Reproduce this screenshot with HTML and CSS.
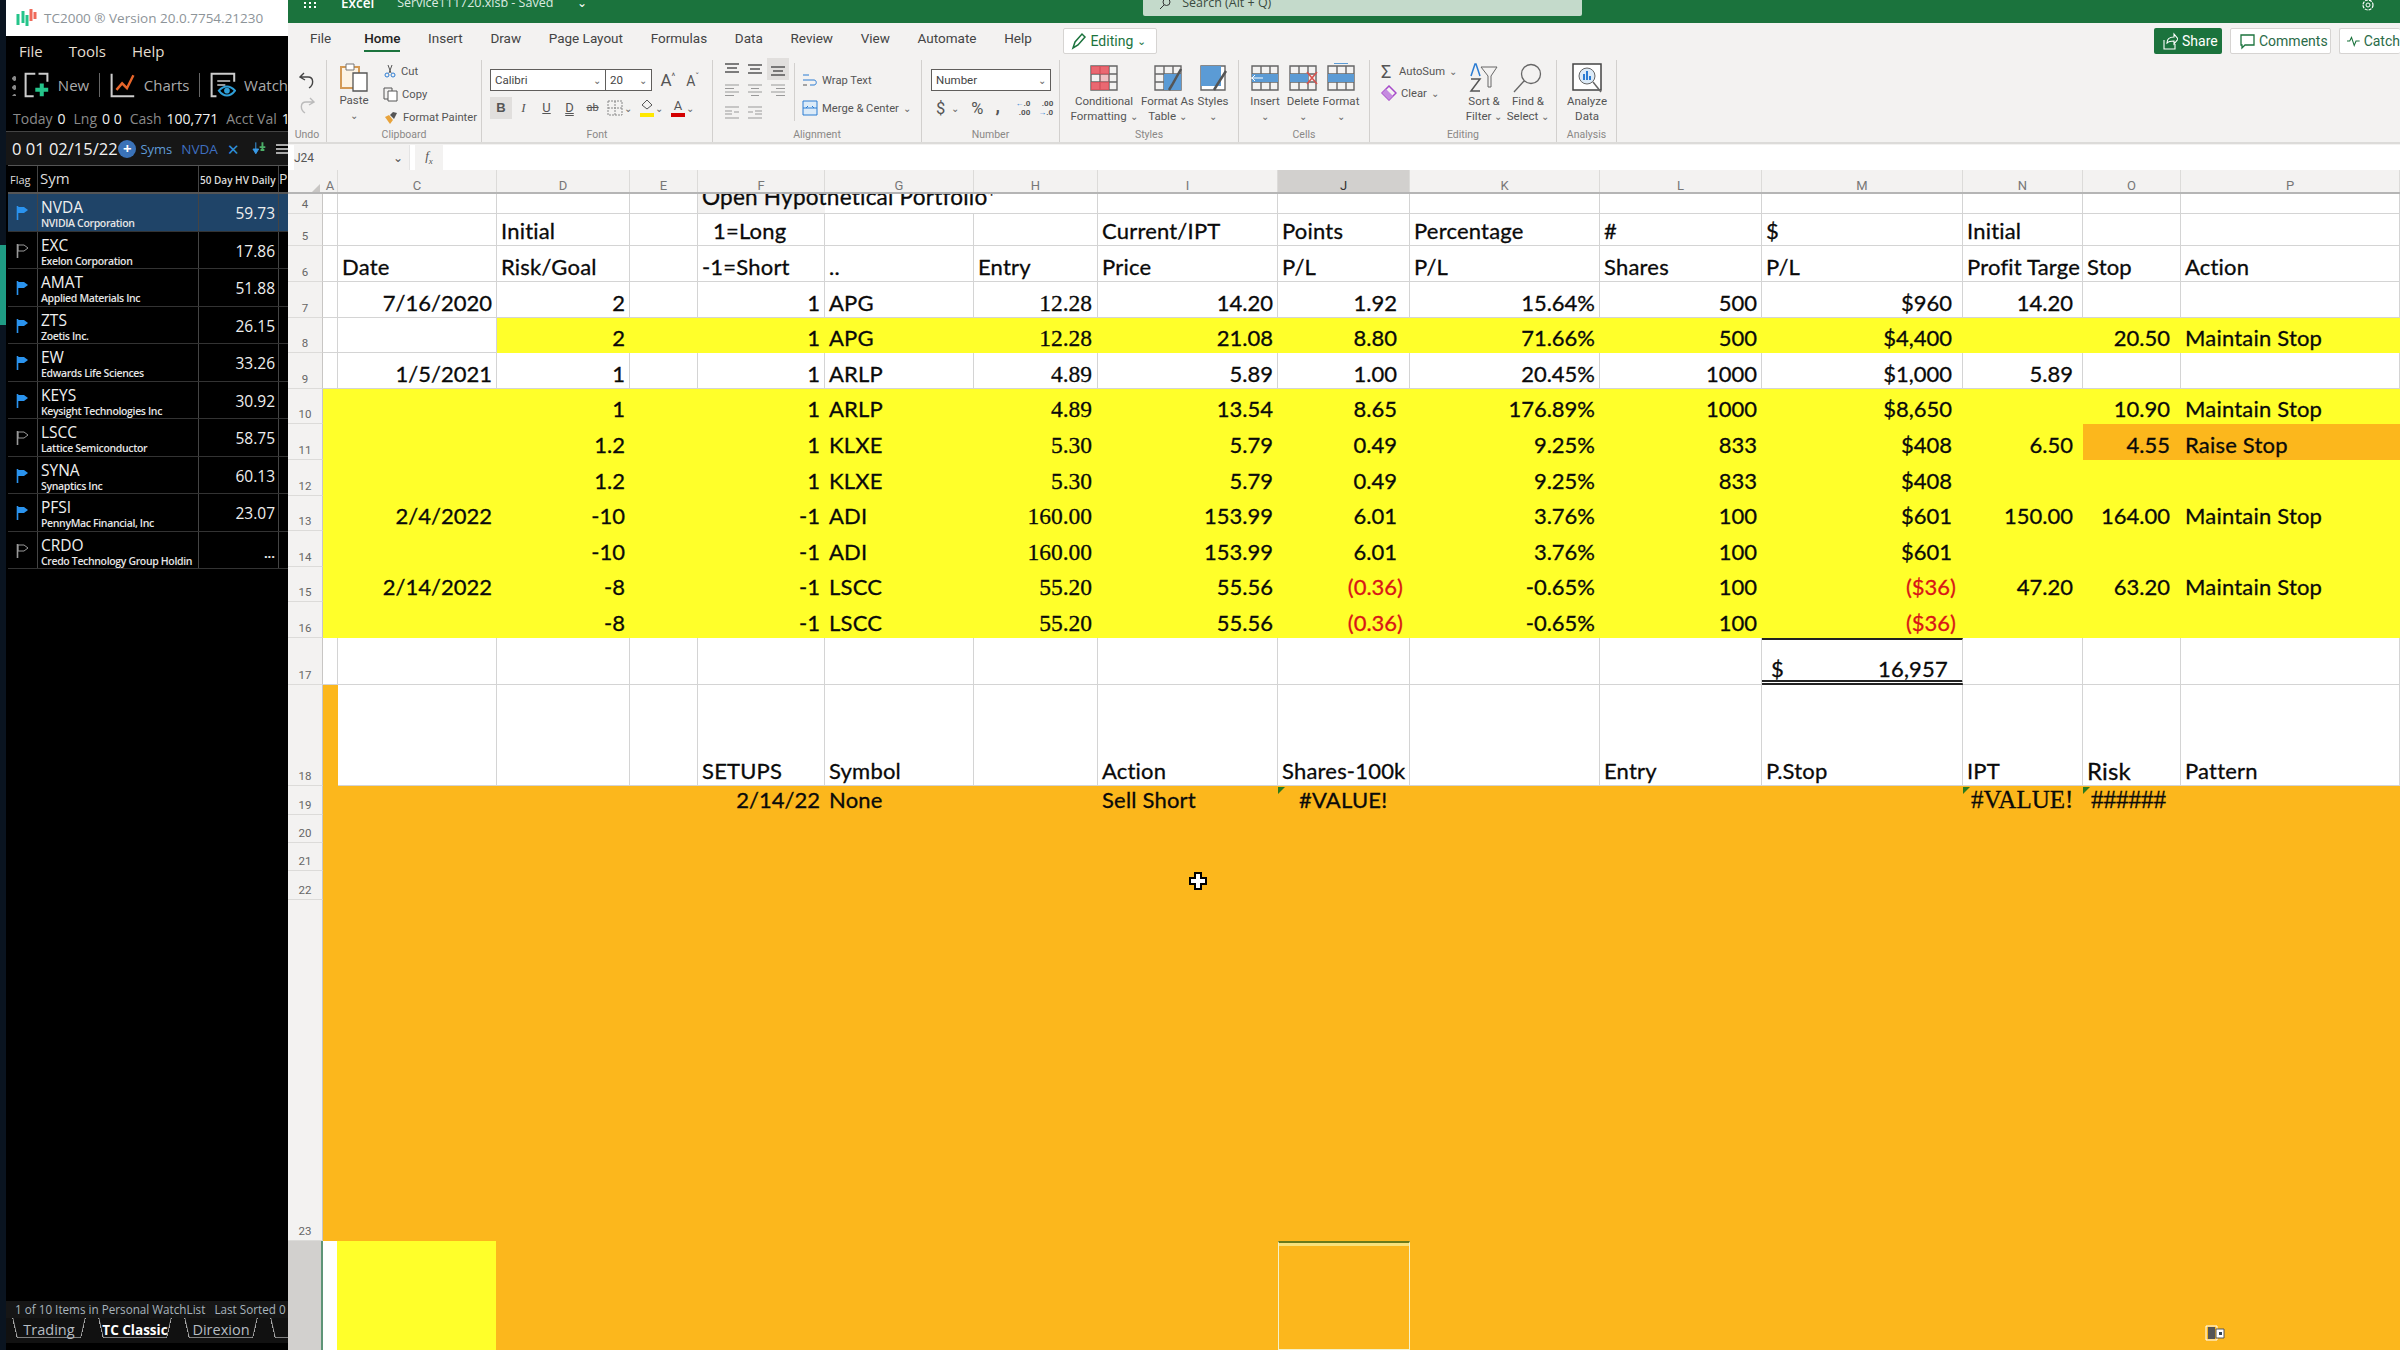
FILE: index.html
```html
<!DOCTYPE html>
<html lang="en">
<head>
    <meta charset="UTF-8">
    <title>TC2000 and Excel</title>
    <link rel="stylesheet" href="styles.css">
</head>
<body>
    <svg class="defs" width="0" height="0">
        <symbol id="flag" viewBox="0 0 14 16"><path d="M1.5 1v14" stroke="currentColor" stroke-width="1.6"/><path d="M2 2h6l4 3-4 3H2z" fill="currentColor"/></symbol>
        <symbol id="flag-off" viewBox="0 0 14 16"><path d="M1.5 1v14" stroke="#999" stroke-width="1.6"/><path d="M2 2h6l4 3-4 3H2z" fill="none" stroke="#999"/></symbol>
        <symbol id="al-top" viewBox="0 0 16 14"><path d="M1 2h14M3 6h10M1 10h14" stroke="#555" stroke-width="1.3"/></symbol>
        <symbol id="al-mid" viewBox="0 0 16 14"><path d="M1 3h14M3 7h10M1 11h14" stroke="#555" stroke-width="1.3"/></symbol>
        <symbol id="al-bot" viewBox="0 0 16 14"><path d="M1 5h14M3 9h10M1 13h14" stroke="#555" stroke-width="1.3"/></symbol>
        <symbol id="al-left" viewBox="0 0 16 14"><path d="M1 1h14M1 4.500h9M1 8h14M1 11.500h9" stroke="#999" stroke-width="1.2"/></symbol>
        <symbol id="al-cen" viewBox="0 0 16 14"><path d="M1 1h14M4 4.500h8M1 8h14M4 11.500h8" stroke="#999" stroke-width="1.2"/></symbol>
        <symbol id="al-right" viewBox="0 0 16 14"><path d="M1 1h14M6 4.500h9M1 8h14M6 11.500h9" stroke="#999" stroke-width="1.2"/></symbol>
        <symbol id="sheet" viewBox="0 0 30 30"><path d="M2 3h26v24H2zM2 11h26M2 19h26M11 3v24M20 3v24" fill="none" stroke="#666" stroke-width="1.4"/></symbol>
    </svg>

    <aside class="tc">
        <div class="tc-title">
            <svg width="22" height="22" viewBox="0 0 22 22"><path d="M3 7v11M8 4v12M12 8v11" stroke="#25c48a" stroke-width="3"/><path d="M16 2v12M20 5v7" stroke="#ef6a5a" stroke-width="3"/></svg>
            <span>TC2000 &reg; Version 20.0.7754.21230</span>
        </div>
        <div class="tc-menu"><span>File</span><span>Tools</span><span>Help</span></div>
        <div class="tc-tools">
            <div class="grip"></div>
            <svg width="32" height="32" viewBox="0 0 32 32"><path d="M14 2H2v28h10M18 2h11v10" fill="none" stroke="#ccc" stroke-width="2.5"/><path d="M22 14v16M14 22h16" stroke="#25c48a" stroke-width="5"/></svg>
            <span class="tool-lb">New</span>
            <i class="tool-sep"></i>
            <svg width="32" height="32" viewBox="0 0 32 32"><path d="M2 2v28h28" fill="none" stroke="#ccc" stroke-width="2.5"/><path d="M8 22l7-8 6 6 8-16" fill="none" stroke="#e8652a" stroke-width="3"/></svg>
            <span class="tool-lb">Charts</span>
            <i class="tool-sep"></i>
            <svg width="32" height="32" viewBox="0 0 32 32"><path d="M8 30H2V2h28v10" fill="none" stroke="#ccc" stroke-width="2.5"/><path d="M9 11h16M9 16h10" stroke="#ccc" stroke-width="2"/><path d="M11 23c6-7 14-7 20 0-6 8-14 8-20 0z" fill="none" stroke="#2f9fd8" stroke-width="2.500"/><circle cx="21" cy="23" r="3.500" fill="#2f9fd8"/></svg>
            <span class="tool-lb">Watch</span>
        </div>
        <div class="tc-stats">
            <span>Today</span><b>0</b><span>Lng</span><b>0 0</b><span>Cash</span><b>100,771</b><span>Acct Val</span><b>1</b>
        </div>
        <div class="tc-list-bar">
            <span class="list-date">0 01 02/15/22</span>
            <i class="plus">+</i>
            <span class="syms">Syms</span>
            <span class="list-sym">NVDA</span>
            <span class="list-x">&#10005;</span>
            <svg width="16" height="16" viewBox="0 0 16 16"><path d="M4 1v9M1 8l3 5 3-5z" fill="#3a9be8" stroke="#3a9be8"/><path d="M11 1v9M8 6h6M9 9h4" stroke="#4caf68" stroke-width="2"/></svg>
            <span class="burger"></span>
        </div>
        <div class="wl-head">
            <div class="w-flag">Flag</div>
            <div class="w-sym">Sym</div>
            <div class="w-val">50 Day HV Daily</div>
            <div class="w-p">P</div>
        </div>
        <div class="wl-row on">
            <div class="w-flag"><svg class="fl"><use href="#flag"/></svg></div>
            <div class="w-sym"><b>NVDA</b><small>NVIDIA Corporation</small></div>
            <div class="w-num">59.73</div><div class="w-p"></div>
        </div>
        <div class="wl-row">
            <div class="w-flag"><svg class="fl"><use href="#flag-off"/></svg></div>
            <div class="w-sym"><b>EXC</b><small>Exelon Corporation</small></div>
            <div class="w-num">17.86</div><div class="w-p"></div>
        </div>
        <div class="wl-row">
            <div class="w-flag"><svg class="fl"><use href="#flag"/></svg></div>
            <div class="w-sym"><b>AMAT</b><small>Applied Materials Inc</small></div>
            <div class="w-num">51.88</div><div class="w-p"></div>
        </div>
        <div class="wl-row">
            <div class="w-flag"><svg class="fl"><use href="#flag"/></svg></div>
            <div class="w-sym"><b>ZTS</b><small>Zoetis Inc.</small></div>
            <div class="w-num">26.15</div><div class="w-p"></div>
        </div>
        <div class="wl-row">
            <div class="w-flag"><svg class="fl"><use href="#flag"/></svg></div>
            <div class="w-sym"><b>EW</b><small>Edwards Life Sciences</small></div>
            <div class="w-num">33.26</div><div class="w-p"></div>
        </div>
        <div class="wl-row">
            <div class="w-flag"><svg class="fl"><use href="#flag"/></svg></div>
            <div class="w-sym"><b>KEYS</b><small>Keysight Technologies Inc</small></div>
            <div class="w-num">30.92</div><div class="w-p"></div>
        </div>
        <div class="wl-row">
            <div class="w-flag"><svg class="fl"><use href="#flag-off"/></svg></div>
            <div class="w-sym"><b>LSCC</b><small>Lattice Semiconductor</small></div>
            <div class="w-num">58.75</div><div class="w-p"></div>
        </div>
        <div class="wl-row">
            <div class="w-flag"><svg class="fl"><use href="#flag"/></svg></div>
            <div class="w-sym"><b>SYNA</b><small>Synaptics Inc</small></div>
            <div class="w-num">60.13</div><div class="w-p"></div>
        </div>
        <div class="wl-row">
            <div class="w-flag"><svg class="fl"><use href="#flag"/></svg></div>
            <div class="w-sym"><b>PFSI</b><small>PennyMac Financial, Inc</small></div>
            <div class="w-num">23.07</div><div class="w-p"></div>
        </div>
        <div class="wl-row">
            <div class="w-flag"><svg class="fl"><use href="#flag-off"/></svg></div>
            <div class="w-sym"><b>CRDO</b><small>Credo Technology Group Holdin</small></div>
            <div class="w-num dots">...</div><div class="w-p"></div>
        </div>
        <div class="tc-fill"></div>
        <div class="tc-foot">1 of 10 Items in Personal WatchList &nbsp; Last Sorted 0</div>
        <div class="tc-tabs">
            <span class="tc-tab">Trading</span>
            <span class="tc-tab cur">TC Classic</span>
            <span class="tc-tab">Direxion</span>
            <span class="tc-tab">Dr</span>
        </div>
    </aside>

    <main class="xl">
        <div class="xl-top">
            <svg class="apps" width="14" height="8" viewBox="0 0 14 8"><path d="M1 2h2v2H1zM6 2h2v2H6zM11 2h2v2h-2zM1 6h2v2H1zM6 6h2v2H6zM11 6h2v2h-2z" fill="#fff"/></svg>
            <b class="xl-app">Excel</b>
            <span class="xl-file">Service111720.xlsb - Saved</span>
            <span class="xl-chev">&#8964;</span>
            <div class="xl-search">
                <svg width="12" height="12" viewBox="0 0 12 12"><circle cx="7.500" cy="2" r="3.500" fill="none" stroke="#333"/><path d="M5 5l-4 4" stroke="#333"/></svg>
                <span>Search (Alt + Q)</span>
            </div>
            <svg class="gear" width="16" height="16" viewBox="0 0 16 16"><circle cx="8" cy="5" r="5" fill="none" stroke="#fff" stroke-width="1.200" stroke-dasharray="3 1"/><circle cx="8" cy="5" r="2" fill="none" stroke="#fff"/></svg>
        </div>

        <div class="xl-tabs">
            <span class="t-file">File</span>
            <span class="cur">Home</span>
            <span>Insert</span>
            <span>Draw</span>
            <span>Page Layout</span>
            <span>Formulas</span>
            <span>Data</span>
            <span>Review</span>
            <span>View</span>
            <span>Automate</span>
            <span>Help</span>
            <div class="btn-edit">
                <svg width="16" height="18" viewBox="0 0 16 18"><path d="M2 16l2-6 7-8 3 3-7 8z" fill="none" stroke="#1b733d" stroke-width="1.500"/></svg>
                <span>Editing</span><em>&#8964;</em>
            </div>
            <div class="tab-right">
                <div class="btn-share">
                    <svg width="16" height="18" viewBox="0 0 16 18"><path d="M2 8v9h11v-5M5 11c0-4 3-6 7-6V2l4 5-4 5V9c-3 0-5 0-7 2z" fill="none" stroke="#fff" stroke-width="1.100"/></svg>
                    <span>Share</span>
                </div>
                <div class="btn-white">
                    <svg width="16" height="18" viewBox="0 0 16 18"><path d="M2 3h13v10H6l-3 3v-3H2z" fill="none" stroke="#1b733d" stroke-width="1.300"/></svg>
                    <span>Comments</span>
                </div>
                <div class="btn-white btn-catch">
                    <svg width="14" height="14" viewBox="0 0 14 14"><path d="M0 7h3l2-4 3 9 2-5h4" fill="none" stroke="#1b733d" stroke-width="1.200"/></svg>
                    <span>Catch</span>
                </div>
            </div>
        </div>

        <div class="ribbon">
            <section class="grp g-undo">
                <div class="grp-body col-center">
                    <svg width="16" height="18" viewBox="0 0 16 18"><path d="M5 1L1 5l5 3M1 5h8c6 0 6 8 1 11" fill="none" stroke="#444" stroke-width="1.400"/></svg>
                    <svg width="16" height="18" viewBox="0 0 16 18"><path d="M11 1l4 4-5 3M15 5H7c-6 0-6 8-1 11" fill="none" stroke="#bbb" stroke-width="1.400"/></svg>
                </div>
                <div class="grp-label">Undo</div>
            </section>
            <section class="grp g-clip">
                <div class="grp-body">
                    <div class="big-btn paste">
                        <svg width="30" height="30" viewBox="0 0 30 30"><path d="M2 5h18v21H2z" fill="#fdf3e3" stroke="#d49a55" stroke-width="2"/><path d="M7 2h8v6H7z" fill="#fff" stroke="#777"/><path d="M14 11h14v18H14z" fill="#fff" stroke="#555" stroke-width="1.300"/></svg>
                        <span>Paste</span><em>&#8964;</em>
                    </div>
                    <div class="mini-stack">
                        <div class="mini"><svg width="14" height="14" viewBox="0 0 14 14"><path d="M5 1l3 8M9 1L6 9" stroke="#555"/><circle cx="4" cy="11" r="2" fill="none" stroke="#2b7cd3"/><circle cx="10" cy="11" r="2" fill="none" stroke="#2b7cd3"/></svg>Cut</div>
                        <div class="mini"><svg width="15" height="15" viewBox="0 0 15 15"><path d="M1 1h8v11H1z" fill="none" stroke="#555"/><path d="M5 4h9v10H5z" fill="#fff" stroke="#555"/></svg>Copy</div>
                        <div class="mini"><svg width="16" height="15" viewBox="0 0 16 15"><path d="M2 7l5 7 3-4-4-5z" fill="#e8a33b"/><path d="M7 5l3-3 4 1-3 6z" fill="#555"/></svg>Format Painter</div>
                    </div>
                </div>
                <div class="grp-label">Clipboard</div>
            </section>
            <section class="grp g-font">
                <div class="grp-body stack">
                    <div class="font-row">
                        <div class="sel sel-font"><span>Calibri</span><em>&#8964;</em></div>
                        <div class="sel sel-size"><span>20</span><em>&#8964;</em></div>
                        <span class="grow-a">A<sup>^</sup></span>
                        <span class="grow-a sm">A<sup>&#711;</sup></span>
                    </div>
                    <div class="font-row fmt">
                        <span class="fmt-b">B</span>
                        <span class="fmt-i">I</span>
                        <span class="fmt-u">U</span>
                        <span class="fmt-u dbl">D</span>
                        <span class="fmt-s">ab</span>
                        <svg class="fmt-bd" width="16" height="16" viewBox="0 0 16 16"><path d="M1 1h14v14H1zM8 1v14M1 8h14" fill="none" stroke="#888" stroke-dasharray="2 1"/></svg><em>&#8964;</em>
                        <span class="swatch yel"><svg width="14" height="11" viewBox="0 0 14 11"><path d="M7 1l5 5-5 4-5-4z" fill="none" stroke="#555"/></svg></span><em>&#8964;</em>
                        <span class="swatch red">A</span><em>&#8964;</em>
                    </div>
                </div>
                <div class="grp-label">Font</div>
            </section>
            <section class="grp g-align">
                <div class="grp-body">
                    <div class="al-grid">
                        <svg><use href="#al-top"/></svg><svg><use href="#al-mid"/></svg><svg class="al-on"><use href="#al-bot"/></svg>
                        <svg><use href="#al-left"/></svg><svg><use href="#al-cen"/></svg><svg><use href="#al-right"/></svg>
                        <svg width="16" height="14" viewBox="0 0 16 14"><path d="M1 1h14M1 12h14M1 5h7M1 8h7M10 6h5" stroke="#999"/></svg>
                        <svg width="16" height="14" viewBox="0 0 16 14"><path d="M1 1h14M1 12h14M8 5h7M8 8h7M1 6h5" stroke="#999"/></svg>
                    </div>
                    <div class="mini-stack wrap-col">
                        <div class="mini"><svg width="16" height="16" viewBox="0 0 16 16"><path d="M1 3h6M1 8h11c3 0 3 5 0 5H8" fill="none" stroke="#2b7cd3"/><path d="M1 13h4" stroke="#555"/></svg>Wrap Text</div>
                        <div class="mini"><svg width="16" height="16" viewBox="0 0 16 16"><path d="M1 1h14v14H1z" fill="#dcebf8" stroke="#2b7cd3"/><path d="M1 8h14M4 8l2-2M12 8l-2-2" stroke="#2b7cd3"/></svg>Merge &amp; Center <em>&#8964;</em></div>
                    </div>
                </div>
                <div class="grp-label">Alignment</div>
            </section>
            <section class="grp g-num">
                <div class="grp-body stack">
                    <div class="sel sel-num"><span>Number</span><em>&#8964;</em></div>
                    <div class="num-row">
                        <span class="dollar">$</span><em>&#8964;</em>
                        <span class="pct">%</span>
                        <b class="comma">,</b>
                        <span class="dec"><u>&larr;</u>.0<br>.00</span>
                        <span class="dec">.00<br><u>&rarr;</u>.0</span>
                    </div>
                </div>
                <div class="grp-label">Number</div>
            </section>
            <section class="grp g-styles">
                <div class="grp-body big-row">
                    <div class="big-btn w-cf">
                        <svg width="30" height="30" viewBox="0 0 30 30"><use href="#sheet"/><path d="M2 3h18v8H2zM2 19h18v8H2z" fill="#e8505b" opacity=".85"/><path d="M11 11h9v8h-9z" fill="#e8505b" opacity=".3"/></svg>
                        <span>Conditional<br>Formatting <em>&#8964;</em></span>
                    </div>
                    <div class="big-btn w-tb">
                        <svg width="30" height="30" viewBox="0 0 30 30"><use href="#sheet"/><path d="M11 11h17v16H11z" fill="#5b9bd5"/><path d="M28 6l-9 16-3 5" stroke="#555" stroke-width="2.500" fill="none"/></svg>
                        <span>Format As<br>Table <em>&#8964;</em></span>
                    </div>
                    <div class="big-btn w-st">
                        <svg width="30" height="30" viewBox="0 0 30 30"><path d="M3 3h24v24H3z" fill="#fff" stroke="#666" stroke-width="1.400"/><path d="M3 3h20v20H3z" fill="#5b9bd5"/><path d="M28 8l-9 14-3 5" stroke="#555" stroke-width="2.500" fill="none"/></svg>
                        <span>Styles<br><em>&#8964;</em></span>
                    </div>
                </div>
                <div class="grp-label">Styles</div>
            </section>
            <section class="grp g-cells">
                <div class="grp-body big-row">
                    <div class="big-btn w-c">
                        <svg width="30" height="30" viewBox="0 0 30 30"><use href="#sheet"/><path d="M2 11h26v8H2z" fill="#5b9bd5"/><path d="M1 15h12M5 12l-3 3 3 3" stroke="#fff" fill="none"/></svg>
                        <span>Insert<br><em>&#8964;</em></span>
                    </div>
                    <div class="big-btn w-c">
                        <svg width="30" height="30" viewBox="0 0 30 30"><use href="#sheet"/><path d="M2 11h18v8H2z" fill="#5b9bd5"/><path d="M19 9l10 12M29 9L19 21" stroke="#d9534f" stroke-width="1.600"/></svg>
                        <span>Delete<br><em>&#8964;</em></span>
                    </div>
                    <div class="big-btn w-c">
                        <svg width="30" height="30" viewBox="0 0 30 30"><use href="#sheet"/><path d="M2 11h26v8H2z" fill="#5b9bd5"/><path d="M8 0h14" stroke="#5b9bd5" stroke-width="2"/></svg>
                        <span>Format<br><em>&#8964;</em></span>
                    </div>
                </div>
                <div class="grp-label">Cells</div>
            </section>
            <section class="grp g-edit">
                <div class="grp-body">
                    <div class="mini-stack sum-col">
                        <div class="mini"><span class="sigma">&Sigma;</span>AutoSum <em>&#8964;</em></div>
                        <div class="mini"><svg width="16" height="16" viewBox="0 0 16 16"><path d="M1 8l7-7 7 7-7 7z" fill="none" stroke="#a64ac9" stroke-width="1.500"/><path d="M1 8l4-4 7 7-4 4z" fill="#c58be0"/></svg>Clear <em>&#8964;</em></div>
                    </div>
                    <div class="big-btn w-sf">
                        <svg width="30" height="30" viewBox="0 0 30 30"><path d="M12 4h16l-6 9v11h-3V13z" fill="none" stroke="#666"/><path d="M2 13L6 1h1l4 12" fill="none" stroke="#2b7cd3" stroke-width="1.500"/><path d="M2 16h9L2 28h9" fill="none" stroke="#555" stroke-width="1.500"/></svg>
                        <span>Sort &amp;<br>Filter <em>&#8964;</em></span>
                    </div>
                    <div class="big-btn w-sf">
                        <svg width="30" height="30" viewBox="0 0 30 30"><circle cx="18" cy="11" r="9.500" fill="none" stroke="#666" stroke-width="1.300"/><path d="M11 18L1 29" stroke="#666" stroke-width="1.300"/></svg>
                        <span>Find &amp;<br>Select <em>&#8964;</em></span>
                    </div>
                </div>
                <div class="grp-label">Editing</div>
            </section>
            <section class="grp g-ana">
                <div class="grp-body big-row">
                    <div class="big-btn w-an">
                        <svg width="30" height="30" viewBox="0 0 30 30"><path d="M1 1h28v26H1z" fill="#fff" stroke="#444" stroke-width="1.500"/><circle cx="15" cy="13" r="8" fill="#dcebf8" stroke="#666"/><path d="M12 17v-6M15 17V8M18 17v-4" stroke="#2b7cd3" stroke-width="2"/><path d="M21 19l8 10" stroke="#666" stroke-width="1.500"/></svg>
                        <span>Analyze<br>Data</span>
                    </div>
                </div>
                <div class="grp-label">Analysis</div>
            </section>
        </div>

        <div class="formula">
            <div class="name-box"><span>J24</span><em>&#8964;</em></div>
            <div class="fx">f<sub>x</sub></div>
            <div class="fx-input"></div>
        </div>

        <div class="sheet">
            <div class="row hdr">
                <div class="corner"></div><div>A</div><div>C</div><div>D</div><div>E</div><div>F</div><div>G</div><div>H</div><div>I</div><div class="sel-col">J</div><div>K</div><div>L</div><div>M</div><div>N</div><div>O</div><div>P</div>
            </div>

            <div class="row r4">
                <div class="rh">4</div><div class="c"></div><div class="c"></div><div class="c"></div><div class="c"></div><div class="c nb title"><span>Open Hypothetical Portfolio*</span></div><div class="c nb"></div><div class="c"></div><div class="c"></div><div class="c"></div><div class="c"></div><div class="c"></div><div class="c"></div><div class="c"></div><div class="c"></div><div class="c"></div>
            </div>
            <div class="row r5">
                <div class="rh">5</div><div class="c"></div><div class="c"></div><div class="c">Initial</div><div class="c"></div><div class="c in">1=Long</div><div class="c"></div><div class="c"></div><div class="c">Current/IPT</div><div class="c">Points</div><div class="c">Percentage</div><div class="c">#</div><div class="c">$</div><div class="c">Initial</div><div class="c"></div><div class="c"></div>
            </div>
            <div class="row r6">
                <div class="rh">6</div><div class="c"></div><div class="c">Date</div><div class="c">Risk/Goal</div><div class="c"></div><div class="c">-1=Short</div><div class="c">..</div><div class="c">Entry</div><div class="c">Price</div><div class="c">P/L</div><div class="c">P/L</div><div class="c">Shares</div><div class="c">P/L</div><div class="c">Profit Targe</div><div class="c">Stop</div><div class="c">Action</div>
            </div>
            <div class="row">
                <div class="rh">7</div><div class="c"></div><div class="c n">7/16/2020</div><div class="c n">2</div><div class="c"></div><div class="c n">1</div><div class="c">APG</div><div class="c n sf">12.28</div><div class="c n">14.20</div><div class="c n p12">1.92</div><div class="c n">15.64%</div><div class="c n">500</div><div class="c n p10">$960</div><div class="c n p9">14.20</div><div class="c"></div><div class="c"></div>
            </div>
            <div class="row">
                <div class="rh">8</div><div class="c"></div><div class="c"></div><div class="c n y">2</div><div class="c y"></div><div class="c n y">1</div><div class="c y">APG</div><div class="c n sf y">12.28</div><div class="c n y">21.08</div><div class="c n p12 y">8.80</div><div class="c n y">71.66%</div><div class="c n y">500</div><div class="c n p10 y">$4,400</div><div class="c y"></div><div class="c n p10 y">20.50</div><div class="c y">Maintain Stop</div>
            </div>
            <div class="row">
                <div class="rh">9</div><div class="c"></div><div class="c n">1/5/2021</div><div class="c n">1</div><div class="c"></div><div class="c n">1</div><div class="c">ARLP</div><div class="c n sf">4.89</div><div class="c n">5.89</div><div class="c n p12">1.00</div><div class="c n">20.45%</div><div class="c n">1000</div><div class="c n p10">$1,000</div><div class="c n p9">5.89</div><div class="c"></div><div class="c"></div>
            </div>
            <div class="row yl">
                <div class="rh">10</div><div class="c"></div><div class="c"></div><div class="c n">1</div><div class="c"></div><div class="c n">1</div><div class="c">ARLP</div><div class="c n sf">4.89</div><div class="c n">13.54</div><div class="c n p12">8.65</div><div class="c n">176.89%</div><div class="c n">1000</div><div class="c n p10">$8,650</div><div class="c"></div><div class="c n p10">10.90</div><div class="c">Maintain Stop</div>
            </div>
            <div class="row yl">
                <div class="rh">11</div><div class="c"></div><div class="c"></div><div class="c n">1.2</div><div class="c"></div><div class="c n">1</div><div class="c">KLXE</div><div class="c n sf">5.30</div><div class="c n">5.79</div><div class="c n p12">0.49</div><div class="c n">9.25%</div><div class="c n">833</div><div class="c n p10">$408</div><div class="c n p9">6.50</div><div class="c n p10 o">4.55</div><div class="c o">Raise Stop</div>
            </div>
            <div class="row yl">
                <div class="rh">12</div><div class="c"></div><div class="c"></div><div class="c n">1.2</div><div class="c"></div><div class="c n">1</div><div class="c">KLXE</div><div class="c n sf">5.30</div><div class="c n">5.79</div><div class="c n p12">0.49</div><div class="c n">9.25%</div><div class="c n">833</div><div class="c n p10">$408</div><div class="c"></div><div class="c"></div><div class="c"></div>
            </div>
            <div class="row yl">
                <div class="rh">13</div><div class="c"></div><div class="c n">2/4/2022</div><div class="c n">-10</div><div class="c"></div><div class="c n">-1</div><div class="c">ADI</div><div class="c n sf">160.00</div><div class="c n">153.99</div><div class="c n p12">6.01</div><div class="c n">3.76%</div><div class="c n">100</div><div class="c n p10">$601</div><div class="c n p9">150.00</div><div class="c n p10">164.00</div><div class="c">Maintain Stop</div>
            </div>
            <div class="row yl">
                <div class="rh">14</div><div class="c"></div><div class="c"></div><div class="c n">-10</div><div class="c"></div><div class="c n">-1</div><div class="c">ADI</div><div class="c n sf">160.00</div><div class="c n">153.99</div><div class="c n p12">6.01</div><div class="c n">3.76%</div><div class="c n">100</div><div class="c n p10">$601</div><div class="c"></div><div class="c"></div><div class="c"></div>
            </div>
            <div class="row yl">
                <div class="rh">15</div><div class="c"></div><div class="c n">2/14/2022</div><div class="c n">-8</div><div class="c"></div><div class="c n">-1</div><div class="c">LSCC</div><div class="c n sf">55.20</div><div class="c n">55.56</div><div class="c n p6 neg">(0.36)</div><div class="c n">-0.65%</div><div class="c n">100</div><div class="c n p6 neg">($36)</div><div class="c n p9">47.20</div><div class="c n p10">63.20</div><div class="c">Maintain Stop</div>
            </div>
            <div class="row yl">
                <div class="rh">16</div><div class="c"></div><div class="c"></div><div class="c n">-8</div><div class="c"></div><div class="c n">-1</div><div class="c">LSCC</div><div class="c n sf">55.20</div><div class="c n">55.56</div><div class="c n p6 neg">(0.36)</div><div class="c n">-0.65%</div><div class="c n">100</div><div class="c n p6 neg">($36)</div><div class="c"></div><div class="c"></div><div class="c"></div>
            </div>
            <div class="row r17">
                <div class="rh">17</div><div class="c"></div><div class="c"></div><div class="c"></div><div class="c"></div><div class="c"></div><div class="c"></div><div class="c"></div><div class="c"></div><div class="c"></div><div class="c"></div><div class="c"></div><div class="c total"><span>$</span><span>16,957</span></div><div class="c"></div><div class="c"></div><div class="c"></div>
            </div>
            <div class="row r18">
                <div class="rh">18</div><div class="c o"></div><div class="c"></div><div class="c"></div><div class="c"></div><div class="c">SETUPS</div><div class="c">Symbol</div><div class="c"></div><div class="c">Action</div><div class="c">Shares-100k</div><div class="c"></div><div class="c">Entry</div><div class="c">P.Stop</div><div class="c">IPT</div><div class="c risk">Risk</div><div class="c">Pattern</div>
            </div>
            <div class="row or r19">
                <div class="rh">19</div><div class="c"></div><div class="c"></div><div class="c"></div><div class="c"></div><div class="c n">2/14/22</div><div class="c">None</div><div class="c"></div><div class="c">Sell Short</div><div class="c err-j tick">#VALUE!</div><div class="c"></div><div class="c"></div><div class="c"></div><div class="c err tick">#VALUE!</div><div class="c err tick">######</div><div class="c"></div>
            </div>
            <div class="row or r20"><div class="rh">20</div><div class="c wide"></div></div>
            <div class="row or r21"><div class="rh">21</div><div class="c wide"></div></div>
            <div class="row or r22"><div class="rh">22</div><div class="c wide"></div></div>
            <div class="row or r23"><div class="rh">23</div><div class="c wide"></div></div>
            <div class="row or r24">
                <div class="rh on"></div><div class="c a-white"></div><div class="c y"></div><div class="c"></div><div class="c"></div><div class="c"></div><div class="c"></div><div class="c"></div><div class="c"></div><div class="c active"></div><div class="c"></div><div class="c"></div><div class="c"></div><div class="c"></div><div class="c"></div><div class="c"></div>
            </div>
        </div>
    </main>

    <svg class="cursor" width="20" height="20" viewBox="0 0 20 20"><path d="M7 2h6v5h5v6h-5v5H7v-5H2V7h5z" fill="#fff" stroke="#000" stroke-width="2"/></svg>
    <svg class="tray-icon" width="20" height="16" viewBox="0 0 20 16"><path d="M1 1h11v14H1z" fill="#fcb71c" stroke="#fff"/><path d="M3 2h7v12H3z" fill="#555"/><path d="M11 4h8v9h-8z" fill="#fff" stroke="#555"/><path d="M14 7h3v3h-3z" fill="#345"/></svg>
</body>
</html>
```

FILE: styles.css
```css
* {
    margin: 0;
    padding: 0;
    box-sizing: border-box;
}
html, body {
    width: 2400px;
    height: 1350px;
    overflow: hidden;
}
body {
    display: flex;
    position: relative;
    background: #000;
    font-family: "Open Sans", sans-serif;
}
em {
    font-style: normal;
}
.defs {
    position: absolute;
}

/* TC2000 side */
.tc {
    width: 288px;
    flex: none;
    height: 1350px;
    display: flex;
    flex-direction: column;
    padding-left: 6px;
    background:
        linear-gradient(#1f9c84, #1f9c84) 0 245px / 6px 80px no-repeat,
        linear-gradient(#0a1420, #0a1420) 0 0 / 6px 100% no-repeat,
        #000;
    overflow: hidden;
    color: #ddd;
}
.tc-title {
    height: 36px;
    flex: none;
    background: #fff;
    display: flex;
    align-items: center;
    gap: 7px;
    padding-left: 9px;
    font-size: 13.5px;
    color: #8d9499;
    white-space: nowrap;
}
.tc-menu {
    height: 30px;
    flex: none;
    display: flex;
    align-items: center;
    gap: 26px;
    padding-left: 13px;
    font-size: 15px;
    color: #e4ddd0;
}
.tc-tools {
    height: 38px;
    flex: none;
    display: flex;
    align-items: center;
    padding-left: 6px;
    white-space: nowrap;
}
.grip {
    width: 5px;
    height: 22px;
    margin-right: 8px;
    background: radial-gradient(circle, #888 2px, transparent 2.5px) 0 0 / 5px 9px;
}
.tool-lb {
    font-size: 15px;
    color: #aaa;
    margin-left: 8px;
}
.tool-sep {
    width: 1px;
    height: 24px;
    background: #666;
    margin: 0 10px;
}
.tc-stats {
    height: 27px;
    flex: none;
    margin-top: 1px;
    display: flex;
    align-items: center;
    gap: 5px;
    padding-left: 7px;
    font-size: 14px;
    color: #8a8a8a;
    white-space: nowrap;
    border-bottom: 1px solid #444;
}
.tc-stats b {
    color: #f0f0f0;
    font-weight: 400;
    margin-right: 3px;
}
.tc-list-bar {
    height: 33px;
    flex: none;
    display: flex;
    align-items: center;
    background: #161616;
    padding-left: 6px;
    font-size: 16.5px;
    white-space: nowrap;
    overflow: hidden;
}
.list-date {
    width: 112px;
    overflow: hidden;
    color: #f2f2f2;
}
.plus {
    width: 18px;
    height: 18px;
    border-radius: 50%;
    background: #3a72b8;
    color: #fff;
    font-style: normal;
    font-weight: 700;
    font-size: 15px;
    line-height: 17px;
    text-align: center;
    margin-right: 4px;
    flex: none;
}
.syms {
    color: #5f9bd6;
    font-size: 13px;
    margin-right: 9px;
}
.list-sym {
    color: #3e6fc0;
    font-size: 13.5px;
    margin-right: 9px;
}
.list-x {
    color: #2f8fd8;
    font-size: 15px;
    margin-right: 12px;
}
.burger {
    width: 12px;
    height: 10px;
    margin-left: 9px;
    border-top: 2px solid #aaa;
    border-bottom: 2px solid #aaa;
    flex: none;
    box-shadow: inset 0 2px 0 #000, inset 0 4px 0 #aaa;
}
.wl-head, .wl-row {
    display: grid;
    grid-template-columns: 30px 161px 80px 9px;
    margin-left: 2px;
    flex: none;
}
.wl-head {
    height: 29px;
    border-top: 1px solid #555;
    border-bottom: 2px solid #555;
    font-size: 14px;
    color: #ddd;
    align-items: center;
}
.wl-head > div, .wl-row > div {
    height: 100%;
    border-right: 1px solid #444;
    overflow: hidden;
    white-space: nowrap;
}
.wl-head .w-flag {
    font-size: 11px;
    padding: 6px 0 0 2px;
}
.wl-head .w-sym {
    font-size: 15px;
    padding: 2px 0 0 2px;
}
.w-val {
    font-size: 10px;
    font-weight: 600;
    padding: 7px 0 0 1px;
}
.wl-head .w-p {
    font-size: 14px;
    padding-top: 3px;
    border-right: 0;
}
.wl-row {
    height: 37.5px;
    border-bottom: 1px solid #333;
}
.wl-row .w-p {
    border-right: 0;
}
.wl-row.on {
    background: #1f4468;
}
.fl {
    width: 14px;
    height: 16px;
    color: #2a93ee;
    margin: 11px 0 0 8px;
}
.w-sym b {
    display: block;
    font-weight: 400;
    font-size: 15.5px;
    line-height: 18px;
    color: #f0f0f0;
    padding: 4px 0 0 3px;
    height: 22px;
}
.w-sym small {
    display: block;
    font-size: 10.5px;
    font-weight: 600;
    line-height: 14px;
    letter-spacing: -.35px;
    color: #e6e6e6;
    padding-left: 3px;
}
.w-num {
    text-align: right;
    padding: 8px 3px 0 0;
    font-size: 15.5px;
    color: #eee;
}
.dots {
    font-weight: 700;
    font-size: 13px;
    padding-top: 12px;
}
.tc-fill {
    flex: 1;
}
.tc-foot {
    height: 17px;
    flex: none;
    background: #161616;
    padding-left: 9px;
    font-size: 11.7px;
    line-height: 17px;
    color: #a8b4bd;
    white-space: nowrap;
    overflow: hidden;
}
.tc-tabs {
    height: 25px;
    flex: none;
    margin-bottom: 7px;
    display: flex;
    background: #111;
    overflow: hidden;
}
.tc-tab {
    width: 86px;
    flex: none;
    position: relative;
    text-align: center;
    font-size: 14.5px;
    line-height: 24px;
    color: #b5bcc2;
}
.tc-tab::before {
    content: "";
    position: absolute;
    left: 6px;
    right: 6px;
    top: -1px;
    bottom: 1px;
    border: 1px solid #aaa;
    border-top: 0;
    transform: perspective(40px) rotateX(-14deg);
    transform-origin: top;
}
.tc-tab.cur {
    color: #fff;
    font-weight: 700;
    font-size: 13.5px;
}

/* Excel side */
.xl {
    flex: 1;
    min-width: 0;
    display: flex;
    flex-direction: column;
    background: #f3f2f1;
    overflow: hidden;
}
.xl-top {
    height: 23px;
    flex: none;
    background: #1b733d;
    color: #fff;
    display: flex;
    align-items: flex-start;
    padding-left: 15px;
    line-height: 6px;
    font-size: 13.5px;
    white-space: nowrap;
}
.xl-app {
    margin-left: 24px;
    font-weight: 600;
}
.xl-file {
    margin-left: 23px;
    width: 160px;
    font-size: 12.5px;
    color: #dcebe1;
}
.xl-chev {
    margin-left: 20px;
    font-size: 12px;
}
.xl-search {
    margin-left: 556px;
    width: 439px;
    height: 16px;
    background: #c4dacb;
    color: #3a4a40;
    border-radius: 0 0 2px 2px;
    display: flex;
    align-items: flex-start;
    gap: 11px;
    padding-left: 16px;
    font-size: 12.5px;
}
.gear {
    margin-left: 778px;
}
.xl-tabs {
    height: 37px;
    flex: none;
    display: flex;
    align-items: flex-start;
    padding: 5px 0 0 22px;
    font-family: Roboto, sans-serif;
    font-size: 13.5px;
    color: #444;
    white-space: nowrap;
}
.xl-tabs > span {
    margin-right: 27.7px;
    height: 24px;
    line-height: 20px;
}
.xl-tabs > span.t-file {
    margin-right: 33px;
}
.xl-tabs > span.cur {
    color: #222;
    font-weight: 500;
    border-bottom: 2px solid #1b733d;
}
.btn-edit, .btn-share, .btn-white {
    height: 26px;
    display: flex;
    align-items: center;
    gap: 4px;
    border-radius: 2px;
    font-size: 14px;
}
.btn-edit {
    width: 94px;
    margin-left: 3px;
    padding-left: 7px;
    background: #fff;
    border: 1px solid #d6d4d2;
    color: #1b733d;
}
.btn-edit em {
    font-size: 11px;
}
.tab-right {
    display: flex;
    gap: 8px;
    margin-left: auto;
}
.btn-share {
    width: 68px;
    padding-left: 8px;
    background: #1b733d;
    color: #fff;
}
.btn-white {
    width: 101px;
    padding-left: 8px;
    background: #fff;
    border: 1px solid #d6d4d2;
    color: #2a6b48;
}
.btn-catch {
    width: 61px;
    border-right: 0;
    padding-left: 7px;
    overflow: hidden;
}
.ribbon {
    height: 84px;
    flex: none;
    display: flex;
    font-family: Roboto, sans-serif;
    font-size: 11.5px;
    color: #555;
    border-bottom: 2px solid #dcdbd9;
    white-space: nowrap;
}
.grp {
    height: 82px;
    flex: none;
    display: flex;
    flex-direction: column;
    border-right: 1px solid #d2d0ce;
}
.grp-body {
    height: 68px;
    display: flex;
}
.grp-label {
    height: 14px;
    line-height: 14px;
    text-align: center;
    font-size: 10.5px;
    color: #8a8886;
}
.g-undo { width: 39px; }
.g-clip { width: 155px; }
.g-font { width: 231px; }
.g-align { width: 209px; }
.g-num { width: 138px; }
.g-styles { width: 179px; }
.g-cells { width: 131px; }
.g-edit { width: 187px; }
.g-ana { width: 60px; }

.col-center {
    flex-direction: column;
    align-items: center;
    gap: 7px;
    padding-top: 12px;
}
.big-btn {
    display: flex;
    flex-direction: column;
    align-items: center;
    text-align: center;
    line-height: 15px;
    color: #555;
}
.big-btn svg {
    margin-bottom: 1px;
    flex: none;
}
.big-btn em, .mini em, .sel em, .num-row em, .fmt em {
    font-size: 10px;
    color: #666;
}
.paste {
    width: 38px;
    margin: 2px 0 0 8px;
}
.mini-stack {
    display: flex;
    flex-direction: column;
    gap: 5px;
    margin: 2px 0 0 10px;
}
.mini {
    height: 18px;
    display: flex;
    align-items: center;
    gap: 4px;
    font-size: 11.2px;
    color: #555;
}
.stack {
    flex-direction: column;
    padding: 9px 0 0 8px;
}
.font-row {
    display: flex;
    align-items: center;
    height: 22px;
}
.sel {
    height: 22px;
    background: #fff;
    border: 1px solid #605e5c;
    display: flex;
    justify-content: space-between;
    align-items: center;
    padding: 0 4px;
    font-size: 11.5px;
    color: #444;
}
.sel-font { width: 120px; border-right: 0; }
.sel-size { width: 49px; margin-right: 8px; }
.grow-a {
    font-size: 17px;
    width: 27px;
    color: #555;
}
.grow-a sup { font-size: 9px; }
.grow-a.sm { font-size: 14px; }
.fmt {
    margin-top: 6px;
    height: 22px;
    font-size: 13px;
    color: #555;
}
.fmt > span {
    flex: none;
    width: 23px;
    height: 22px;
    line-height: 22px;
    text-align: center;
}
.fmt > span.fmt-b {
    width: 22px;
    background: #e1dfdd;
    font-weight: 700;
    font-family: "Liberation Sans", sans-serif;
}
.fmt > span.fmt-i {
    font-style: italic;
    font-family: "Liberation Serif", serif;
}
.fmt-u { text-decoration: underline; }
.fmt-u.dbl { text-decoration-style: double; }
.fmt > span.fmt-s {
    text-decoration: line-through;
    font-size: 11px;
}
.fmt-bd {
    margin-left: 3px;
}
.fmt em {
    width: 10px;
    text-align: center;
}
.fmt > span.swatch {
    width: 14px;
    height: 18px;
    margin-left: 7px;
    line-height: 14px;
}
.swatch.yel { border-bottom: 4px solid #ffe800; }
.swatch.red { border-bottom: 4px solid #d40000; }
.al-grid {
    display: grid;
    grid-template-columns: repeat(3, 23px);
    grid-auto-rows: 22px;
    margin: -2px 0 0 7px;
}
.al-grid svg {
    width: 16px;
    height: 14px;
    align-self: center;
    justify-self: center;
}
.al-grid .al-on {
    width: 22px;
    height: 22px;
    background: #e1dfdd;
    padding: 4px 3px;
}
.wrap-col {
    border-left: 1px solid #d2d0ce;
    margin: 3px 0 0 5px;
    padding: 8px 0 0 7px;
    height: 58px;
    gap: 10px;
}
.sel-num {
    width: 120px;
    flex: none;
    margin-left: 1px;
}
.num-row {
    display: flex;
    align-items: center;
    gap: 6px;
    margin-top: 6px;
    padding-left: 6px;
    height: 22px;
}
.dollar, .pct { font-size: 16.5px; }
.pct { margin: 0 6px 0 6px; }
.comma { font-size: 18px; margin-top: -6px; width: 12px; }
.dec {
    font-size: 8px;
    line-height: 9px;
    font-weight: 700;
    text-align: right;
    margin-left: 2px;
}
.dec u {
    color: #2b7cd3;
    text-decoration: none;
}
.big-row {
    padding-top: 3px;
}
.w-cf { width: 72px; margin-left: 8px; }
.w-tb { width: 55px; }
.w-st { width: 36px; }
.w-c { width: 38px; }
.w-c:first-child { margin-left: 7px; }
.w-sf { width: 42px; margin: 3px 0 0 2px; }
.w-an { width: 44px; margin-left: 8px; }
.sum-col {
    margin: 2px 0 0 11px;
    gap: 4px;
    width: 80px;
}
.sigma {
    font-size: 18px;
    width: 14px;
    color: #555;
}
.formula {
    height: 25px;
    flex: none;
    display: flex;
    margin-top: 1px;
    background: #fff;
    font-family: Roboto, sans-serif;
    font-size: 12px;
    color: #555;
}
.name-box {
    width: 116px;
    margin-left: 6px;
    background: #f3f2f1;
    border-right: 1px solid #e4e4e4;
    display: flex;
    justify-content: space-between;
    align-items: center;
    padding: 0 6px 0 0;
}
.fx {
    width: 28px;
    margin-left: 5px;
    text-align: center;
    font-family: "Liberation Serif", serif;
    font-style: italic;
    line-height: 22px;
    font-size: 13px;
    background: #f3f2f1;
}
.fx sub { font-size: 9px; }
.fx-input {
    flex: 1;
}

/* sheet */
.sheet {
    flex: 1;
    font-family: Lato, sans-serif;
    font-size: 22px;
    color: #0a0a0a;
}
.row {
    display: grid;
    grid-template-columns: 35px 15px 159px 133px 68px 127px 149px 124px 180px 132px 190px 162px 201px 120px 98px 219px;
    height: 35.6px;
    line-height: 28px;
}
.hdr {
    height: 24px;
    line-height: 32px;
    font-family: Roboto, sans-serif;
    font-size: 13px;
    color: #777;
    text-align: center;
    background: #f3f2f1;
    border-bottom: 2px solid #b5b5b5;
    overflow: hidden;
}
.hdr > div {
    border-right: 1px solid #dcdbd9;
}
.hdr .corner {
    position: relative;
    border-right: 0;
}
.hdr .corner::after {
    content: "";
    position: absolute;
    right: 3px;
    bottom: 2px;
    border-style: solid;
    border-width: 0 0 16px 16px;
    border-color: transparent transparent #c8c6c4 transparent;
}
.hdr .sel-col {
    background: #d2d0ce;
    color: #333;
    border-bottom: 2px solid #1b733d;
    height: 24px;
}
.rh {
    display: flex;
    align-items: flex-end;
    justify-content: center;
    padding-bottom: 1px;
    line-height: 16px;
    background: #f3f2f1;
    border-bottom: 1px solid #dcdbd9;
    border-right: 1px solid #c8c6c4;
    font-family: Roboto, sans-serif;
    font-size: 11.5px;
    color: #666;
}
.c {
    display: flex;
    align-items: flex-end;
    padding: 0 4px;
    background: #fff;
    border-right: 1px solid #d4d4d4;
    border-bottom: 1px solid #d4d4d4;
    overflow: hidden;
    white-space: nowrap;
    letter-spacing: .2px;
    -webkit-text-stroke: .3px currentColor;
}
.n {
    justify-content: flex-end;
    letter-spacing: 0;
}
.nb {
    border-right: 0;
}
.in {
    padding-left: 15px;
}
.sf {
    font-family: "Liberation Serif", serif;
    font-size: 23.5px;
    padding-right: 5px;
}
.p12 { padding-right: 12px; }
.p10 { padding-right: 10px; }
.p9 { padding-right: 9px; }
.p6 { padding-right: 6px; }
.neg {
    color: #d81616;
}
.y, .yl .c {
    background: #ffff2a;
    border-color: #ffff2a;
}
.o, .yl .c.o {
    background: #fcb71c;
    border-color: #fcb71c;
}
.r18 .c.o {
    border-bottom-color: #fcb71c;
}
.r4 {
    height: 20px;
    grid-template-rows: 20px;
    overflow: hidden;
}
.title {
    overflow: visible;
    position: relative;
    z-index: 1;
    background: transparent;
    font-size: 22.6px;
    line-height: 26px;
}
.title span {
    display: block;
    margin-bottom: 3px;
}
.r5 { height: 32px; }
.r6 { height: 36px; }
.r17 { height: 47px; }
.r18 { height: 101px; }
.total {
    justify-content: space-between;
    border-top: 2px solid #222;
    border-bottom: 5px double #222;
    padding: 0 14px 0 9px;
}
.total span {
    margin-bottom: -3px;
}
.risk {
    font-size: 24px;
}
.or {
    background: #fcb71c;
}
.or .c {
    background: #fcb71c;
    border-color: #fcb71c;
}
.r19 { height: 29px; }
.r20, .r21 { height: 28px; }
.r22 { height: 29px; }
.r23 { height: 341px; }
.r24 { height: 109px; }
.wide {
    grid-column: 2 / -1;
}
.tick {
    position: relative;
}
.tick::before {
    content: "";
    position: absolute;
    left: 0;
    top: 1px;
    border-style: solid;
    border-width: 7px 7px 0 0;
    border-color: #2a7a1e transparent transparent transparent;
}
.err-j {
    padding-left: 21px;
}
.err {
    font-family: "Liberation Serif", serif;
    font-size: 25px;
    letter-spacing: 0;
    padding-left: 8px;
}
.rh.on {
    background: #d2d0ce;
    border-right: 2px solid #5e9477;
    border-bottom: 0;
}
.or .c.a-white {
    background: #fff;
    border-color: #fff;
}
.or .c.y {
    background: #ffff2a;
    border-color: #ffff2a;
    margin: 0 1px 0 -1px;
}
.or .c.active {
    border: 1px solid #f4f2c8;
    border-top: 2px solid #6b7a1a;
    box-shadow: inset 0 3px 0 #f9e27a;
}

/* things on top of the sheet */
.cursor {
    position: absolute;
    left: 1188px;
    top: 871px;
}
.tray-icon {
    position: absolute;
    left: 2205px;
    top: 1325px;
}
```
